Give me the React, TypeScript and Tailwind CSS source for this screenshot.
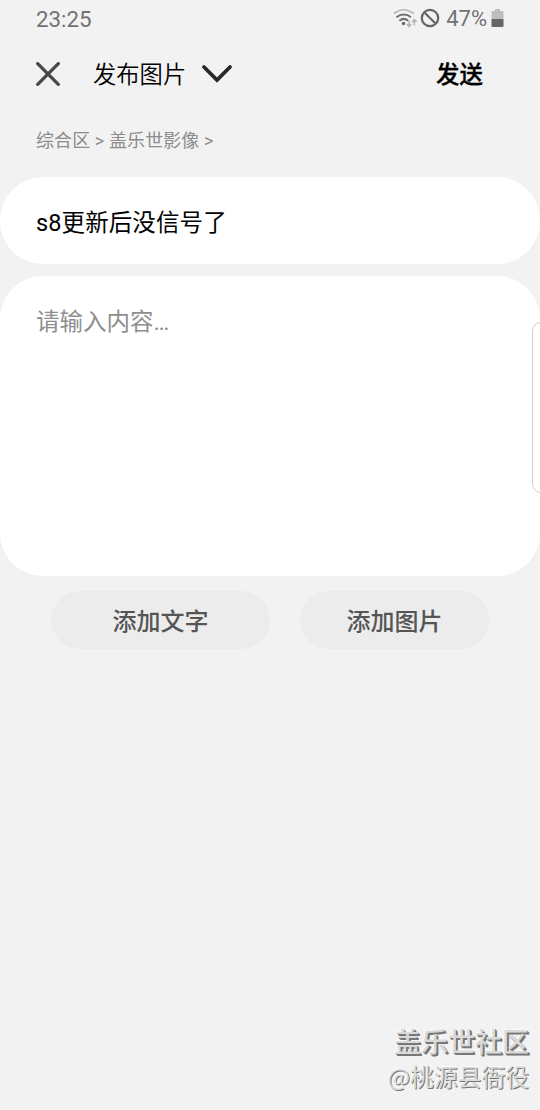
import { useState } from "react"

const StatusBar = () => {
    return (
        <div className="flex h-[37px] items-center justify-between px-9 text-[22px] leading-none text-[#727272]">
            <span className="pt-px text-[22.300px]">23:25</span>
            <div className="flex items-center">
                <svg className="-mt-[2px]" width="25" height="20" viewBox="0 0 25 20" fill="none">
                    <path d="M.8 5.500C7 .6 14.500 .6 20.700 5.500" stroke="#bcbcbc" strokeWidth="1.900" />
                    <path d="M3.500 9.200C7.800 5.600 13.800 5.600 18 9.200" stroke="#727272" strokeWidth="2" />
                    <path d="M6.400 12.700c2.600-2.200 6.200-2.200 8.800 0" stroke="#727272" strokeWidth="2" />
                    <circle cx="10.500" cy="15.500" r="1.700" fill="#666" />
                    <path d="M16 12.500v6M13.800 16l2.200 2.500 2.200-2.500M21.300 17.500V11.500M19.100 14l2.200-2.500 2.200 2.500" stroke="#b5b5b5" strokeWidth="1.500" />
                </svg>
                <svg className="-mt-[1px] ml-[2px]" width="20" height="20" viewBox="0 0 20 20" fill="none" stroke="#666" strokeWidth="2.200">
                    <circle cx="10" cy="10" r="8.200" />
                    <path d="M4.200 4.200l11.600 11.600" />
                </svg>
                <span className="ml-[6px] pt-px">47%</span>
                <svg className="-mt-[1px] ml-[4px]" width="13" height="20" viewBox="0 0 13 20">
                    <path d="M4 1h5v2h2.500q1 0 1 1v7H.500V4q0-1 1-1H4z" fill="#bdbdbd" />
                    <path d="M.500 11h12v7q0 1-1 1h-10q-1 0-1-1z" fill="#666" />
                </svg>
            </div>
        </div>
    )
}

const Header = () => {
    return (
        <header className="flex h-[73px] items-center pl-9 pr-[57px] text-black">
            <button type="button" aria-label="关闭">
                <svg width="24" height="24" viewBox="0 0 24 24" fill="none" stroke="#484848" strokeWidth="3.300" strokeLinecap="round">
                    <path d="M1.700 1.700l20.600 20.600M22.300 1.700L1.700 22.300" />
                </svg>
            </button>
            <button type="button" className="ml-[33px] flex items-center text-[23.300px]">
                <span className="pt-1 font-[350]">发布图片</span>
                <svg className="ml-[15px]" width="32" height="20" viewBox="0 0 32 20" fill="none" stroke="#282828" strokeWidth="3.800" strokeLinecap="round">
                    <path d="M3 3l13 13L29 3" />
                </svg>
            </button>
            <button type="button" className="ml-auto pt-[5px] text-[23.500px] font-medium [-webkit-text-stroke:0.300px_#000]">发送</button>
        </header>
    )
}

export default function App() {

    const [ title, setTitle ] = useState<string>("s8更新后没信号了")
    const [ content, setContent ] = useState<string>("")

    return (
        <div className="relative flex h-[1110px] w-[540px] flex-col overflow-hidden bg-[#f2f2f2] font-[Roboto,'Noto_Sans_CJK_SC',sans-serif]">
            <StatusBar />
            <Header />
            <p className="flex h-[67px] items-start pl-9 pt-[17px] text-[18px] leading-[27px] tracking-[0.100px] text-[#8c8c8c]">综合区 &gt; 盖乐世影像 &gt;</p>

            <input
                type="text"
                aria-label="标题"
                className="h-[87px] shrink-0 rounded-[43px] bg-white px-9 text-[23.500px] tracking-[0.100px] text-black outline-none"
                value={title}
                onChange={(e) => setTitle(e.target.value)}
            />
            <textarea
                placeholder="请输入内容…"
                className="mt-3 h-[300px] shrink-0 resize-none rounded-[43px] bg-white px-9 pt-[29px] text-[23.500px] leading-[35px] text-black outline-none placeholder:text-[#8e8e8e]"
                value={content}
                onChange={(e) => setContent(e.target.value)}
            />

            <div className="mt-[15px] flex gap-[30px] pl-[51px] text-[24px] font-medium text-[#555]">
                <button type="button" className="h-[58px] w-[219px] rounded-full bg-[#ececec] pt-1">添加文字</button>
                <button type="button" className="h-[58px] w-[189px] rounded-full bg-[#ececec] pt-1">添加图片</button>
            </div>

            {/* edge panel handle */}
            <div className="absolute -right-[10px] top-[322px] h-[171px] w-[18px] rounded-[9px] border border-[#cfcfcf] bg-white" />

            <div className="mt-auto flex flex-col items-end pb-[17px] pr-[11px] font-['Noto_Sans_CJK_SC',sans-serif] text-[#dadada]">
                <span className="text-[27px] font-medium leading-[36px] [text-shadow:1px_1px_0_#777,2px_2px_0_#777,-1px_-1px_0_#fcfaf5]">盖乐世社区</span>
                <span className="text-[23.800px] leading-[34px] [text-shadow:1px_1px_0_#777,-1px_-1px_0_#fcfaf5]">@桃源县衙役</span>
            </div>
        </div>
    )
}
